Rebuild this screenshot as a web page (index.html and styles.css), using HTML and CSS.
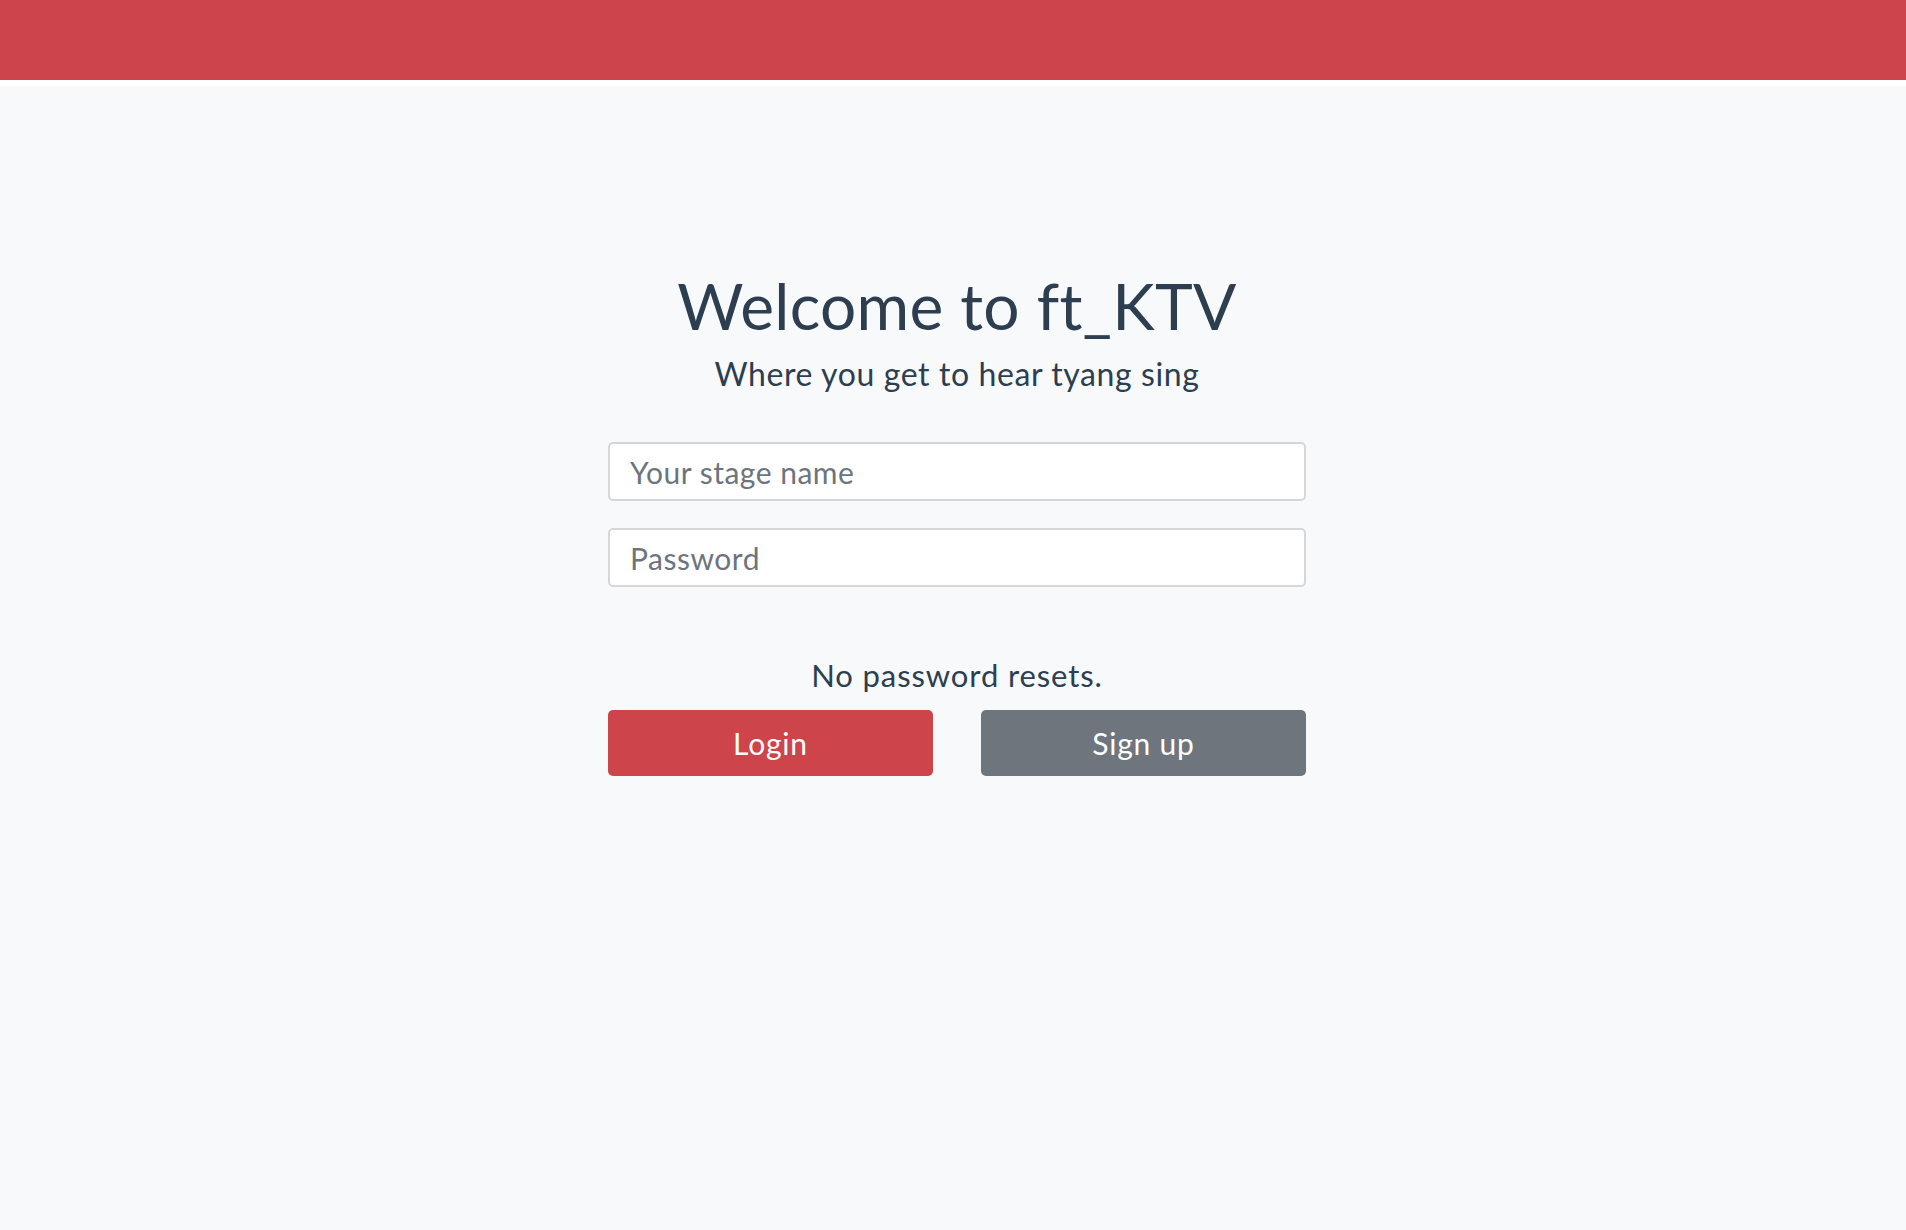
FILE: index.html
```html
<!DOCTYPE html>
<html>
<head>
<meta charset="utf-8">
<link rel="stylesheet" href="styles.css">
</head>
<body>
<header class="topbar"></header>
<main class="page">
  <section class="login">
    <h1 class="title">Welcome to ft_KTV</h1>
    <p class="subtitle">Where you get to hear tyang sing</p>
    <form class="form">
      <input class="field" type="text" placeholder="Your stage name">
      <input class="field" type="password" placeholder="Password">
      <p class="note">No password resets.</p>
      <div class="actions">
        <button type="button" class="btn btn-login">Login</button>
        <button type="button" class="btn btn-signup">Sign up</button>
      </div>
    </form>
  </section>
</main>
</body>
</html>
```
FILE: styles.css
```css
html, body {
  margin: 0;
  padding: 0;
  height: 100%;
}
body {
  background: #f8f9fa;
  font-family: "Lato", "Noto Sans", sans-serif;
  color: #2c3e50;
}
.topbar {
  height: 80px;
  background: #cd454c;
  border-bottom: 6px solid #ffffff;
}
.page {
  display: flex;
  justify-content: center;
  padding-left: 8px;
}
.login {
  width: 698px;
  display: flex;
  flex-direction: column;
  align-items: stretch;
  text-align: center;
  padding-top: 180px;
}
.title {
  margin: 0;
  font-size: 64px;
  font-weight: 400;
  line-height: 80px;
  letter-spacing: 0.3px;
}
.subtitle {
  margin: 8px 0 0;
  font-size: 32px;
  line-height: 40px;
  letter-spacing: 0.6px;
}
.form {
  display: flex;
  flex-direction: column;
  margin-top: 48px;
}
.field {
  box-sizing: border-box;
  height: 59px;
  border: 2px solid #d3d7dc;
  border-radius: 5px;
  background: #ffffff;
  padding: 0 20px;
  font-family: inherit;
  font-size: 30px;
  letter-spacing: 0.5px;
  color: #495057;
  outline: none;
}
.field + .field {
  margin-top: 27px;
}
.field::placeholder {
  color: #6c757d;
}
.note {
  margin: 68px 0 0;
  font-size: 31px;
  line-height: 40px;
  letter-spacing: 0.9px;
}
.actions {
  display: grid;
  grid-template-columns: 1fr 1fr;
  column-gap: 48px;
  margin-top: 15px;
}
.btn {
  height: 66px;
  border: none;
  border-radius: 5px;
  font-family: inherit;
  font-size: 30px;
  letter-spacing: 0.8px;
  color: #ffffff;
  cursor: pointer;
}
.btn-login {
  background: #cd444b;
}
.btn-signup {
  background: #6e757d;
}
```
